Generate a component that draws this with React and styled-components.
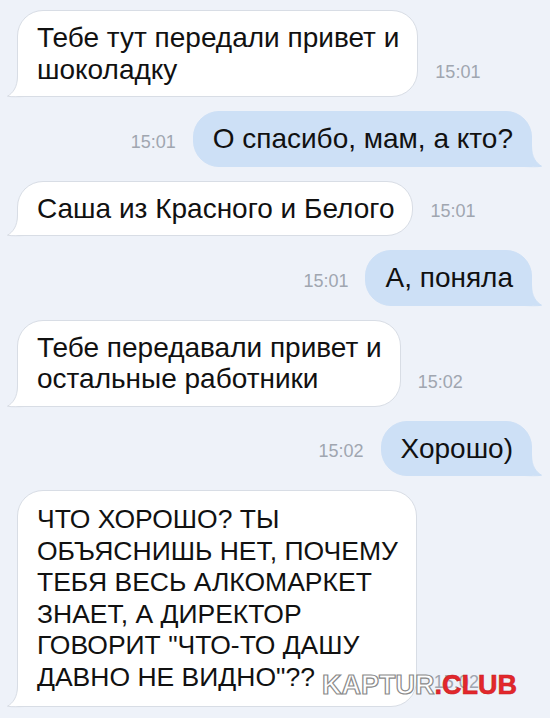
import React from "react";
import styled, { createGlobalStyle } from "styled-components";

const GlobalStyle = createGlobalStyle`
  html, body {
    margin: 0;
    padding: 0;
    background: #eef2f9;
  }
  body {
    font-family: "Liberation Sans", Arial, sans-serif;
    overflow: hidden;
  }
`;

const Chat = styled.div`
  position: relative;
  box-sizing: border-box;
  height: 718px;
  overflow: hidden;
  display: flex;
  flex-direction: column;
  gap: 14px;
  padding: 10px 18px 0 17px;
  background: #eef2f9;
`;

const Row = styled.div`
  display: flex;
  align-items: flex-end;
  justify-content: ${(p) => (p.$out ? "flex-end" : "flex-start")};
  gap: 17px;
`;

const Bubble = styled.div`
  position: relative;
  box-sizing: border-box;
  background: ${(p) => (p.$out ? "#cde0f6" : "#ffffff")};
  border: 1px solid ${(p) => (p.$out ? "#cde0f6" : "#d8dde5")};
  border-radius: 26px;
  ${(p) =>
    p.$out ? "border-bottom-right-radius: 0;" : "border-bottom-left-radius: 0;"}
  padding: ${(p) => (p.$big ? "13px 18px 13px 19px" : "11px 18px 11px 19px")};
  font-size: ${(p) => (p.$big ? "26.5px" : "28px")};
  line-height: 31.5px;
  color: #111111;
  white-space: nowrap;
`;

const Time = styled.span`
  flex: none;
  font-size: 18px;
  line-height: 20px;
  color: #a0a6b0;
  margin-bottom: 15px;
`;

const TailSvg = styled.svg`
  position: absolute;
  bottom: -1px;
  ${(p) => (p.$out ? "right: -12px; transform: scaleX(-1);" : "left: -12px;")}
  width: 26px;
  height: 22px;
  overflow: visible;
`;

const Watermark = styled.div`
  position: absolute;
  right: 33px;
  bottom: 19px;
  font-family: "Liberation Sans", Arial, sans-serif;
  font-weight: 700;
  font-size: 27px;
  line-height: 27px;
  white-space: nowrap;
`;

const Outline = styled.span`
  color: #ffffff;
  -webkit-text-stroke: 1.2px #8a8a8a;
`;

const Red = styled.span`
  color: #e3272c;
  -webkit-text-stroke: 0.6px #c91f24;
`;

function Tail({ out }) {
  const fill = out ? "#cde0f6" : "#ffffff";
  const stroke = out ? "#cde0f6" : "#d8dde5";
  return (
    <TailSvg $out={out} viewBox="0 0 26 22">
      <path
        d="M11.5 2 C11.5 12 7 18 1.5 21.2 C6 21.9 12 21.4 17 20.6 L26 20.6 L26 2 Z"
        fill={fill}
      />
      <path
        d="M11.5 1 C11.5 12 7 18 1.5 21.2 C6 22 12 21.7 18 21.5"
        fill="none"
        stroke={stroke}
        strokeWidth="1"
      />
    </TailSvg>
  );
}

const messages = [
  { out: false, lines: ["Тебе тут передали привет и", "шоколадку"], time: "15:01" },
  { out: true, lines: ["О спасибо, мам, а кто?"], time: "15:01" },
  { out: false, lines: ["Саша из Красного и Белого"], time: "15:01" },
  { out: true, lines: ["А, поняла"], time: "15:01" },
  { out: false, lines: ["Тебе передавали привет и", "остальные работники"], time: "15:02" },
  { out: true, lines: ["Хорошо)"], time: "15:02" },
  {
    out: false,
    big: true,
    lines: [
      "ЧТО ХОРОШО? ТЫ",
      "ОБЪЯСНИШЬ НЕТ, ПОЧЕМУ",
      "ТЕБЯ ВЕСЬ АЛКОМАРКЕТ",
      "ЗНАЕТ, А ДИРЕКТОР",
      "ГОВОРИТ \"ЧТО-ТО ДАШУ",
      "ДАВНО НЕ ВИДНО\"??",
    ],
    time: "15:02",
  },
];

export default function App() {
  return (
    <>
      <GlobalStyle />
      <Chat>
        {messages.map((m, i) => (
          <Row key={i} $out={m.out}>
            {m.out && <Time>{m.time}</Time>}
            <Bubble $out={m.out} $big={m.big}>
              {m.lines.map((l, j) => (
                <React.Fragment key={j}>
                  {j > 0 && <br />}
                  {l}
                </React.Fragment>
              ))}
              <Tail out={m.out} />
            </Bubble>
            {!m.out && <Time>{m.time}</Time>}
          </Row>
        ))}
        <Watermark>
          <Outline>KAPTUR</Outline>
          <Red>.CLUB</Red>
        </Watermark>
      </Chat>
    </>
  );
}
